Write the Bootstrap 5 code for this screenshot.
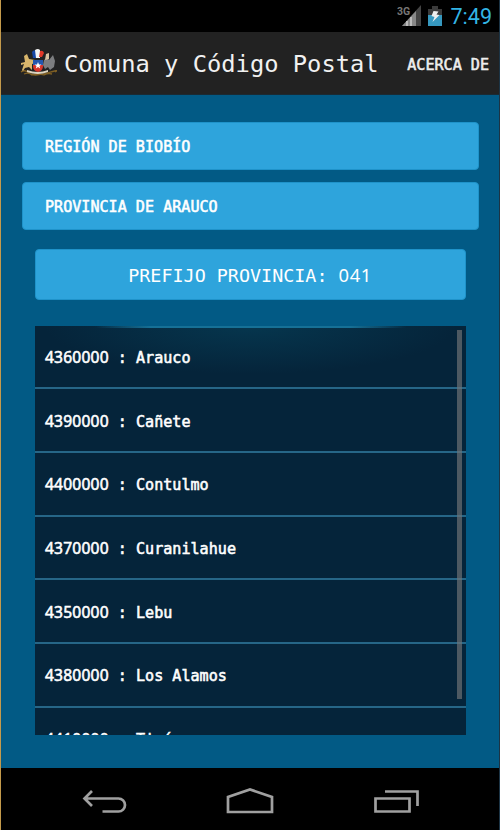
<!DOCTYPE html>
<html lang="es">
<head>
<meta charset="utf-8">
<meta name="viewport" content="width=device-width, initial-scale=1">
<title>Comuna y Código Postal</title>
<link href="https://cdn.jsdelivr.net/npm/bootstrap@5.3.0/dist/css/bootstrap.min.css" rel="stylesheet">
<style>
  body { font-family: "DejaVu Sans Mono", monospace; background: #000; color: #fff; }
  .phone { width: 500px; height: 830px; background: #025a85; border-left: 1px solid #c49a4b; border-right: 1px solid #1c3445; }
  .status { height: 32px; background: #000; padding-right: 7px; }
  .clock { font: 21.5px/32px Roboto, sans-serif; color: #33b5e5; margin-left: 8px; padding-top: 2px; }
  .appbar { height: 63px; background: #222; border-bottom: 1px solid #1a2a33; padding: 0 10px 0 18px; }
  .title { font-size: 23.75px; line-height: 30px; color: #f1f1f1; margin-left: 7px; padding-top: 2px; }
  .strong-text { font-size: 15.1px; line-height: 20px; -webkit-text-stroke: .55px currentColor; white-space: pre; }
  .about { color: #eee; padding-top: 3px; }
  .digits { font-family: "Noto Sans", sans-serif; letter-spacing: .03em; line-height: 1; }
  .screen { height: 673px; padding: 27px 20.5px 0; }
  .picker, .prefix { background: #2ea4dc; border: 1px solid #1f93ca; border-radius: 4px; color: #fff; }
  .picker { height: 48px; margin-bottom: 12px; padding: 1px 22.5px 0; }
  .prefix { height: 51px; margin: 19px 13px 0; font-size: 18.4px; line-height: 24px; padding-top: 2px; }
  .places { height: 409.5px; margin: 25.500px 13px 0; background: #05243a; }
  .place { flex: 0 0 63.7px; padding: 3px 10.5px 0; border-bottom: 2px solid #266687; }
  .place .digits { font-size: 15.6px; letter-spacing: .012em; }
  .glow { inset: 0 0 auto; height: 50px; background: radial-gradient(ellipse 205px 48px at 50% 0, #06364e, transparent); }
  .glow-line { top: 0; left: 60px; right: 60px; height: 2px; background: linear-gradient(90deg, transparent, #167096 18%, #167096 82%, transparent); }
  .thumb { top: 4px; right: 4px; width: 5px; height: 369px; background: rgba(112, 115, 118, .68); }
  .softkeys { height: 62px; background: #000; }
</style>
<script src="https://cdn.jsdelivr.net/npm/bootstrap@5.3.0/dist/js/bootstrap.bundle.min.js"></script>
</head>
<body class="overflow-hidden">
<div class="phone d-flex flex-column overflow-hidden">
  <div class="status d-flex justify-content-end align-items-center">
    <svg width="46" height="32" viewBox="0 0 46 32">
      <text x="0" y="15" font-family="Roboto, sans-serif" font-size="10.5" font-weight="700" fill="#777">3G</text>
      <path d="M24 5v21H5z" fill="#444"/>
      <path d="M19 11v15H5z" fill="#888"/>
      <path d="M10 21v5M14 17v9" stroke="#bbb" stroke-width="2"/>
      <path d="M35 6h6v3h4v7H31V9h4z" fill="#3b3b3b"/>
      <path d="M31 15h14v11H31z" fill="#3698bf"/>
      <path d="M36.500 11l5 .5-2 3 3 .5-7 7 2-5-3-1z" fill="#eee"/>
    </svg>
    <div class="clock">7:49</div>
  </div>

  <nav class="appbar d-flex align-items-center">
    <svg width="38" height="28" viewBox="0 0 38 28">
      <path d="M2 23q4-3 8 1t18 0 8-1M5 25q5-2 8 1 6-2 12 0 4-2 8-1" fill="none" stroke="#806024" stroke-width="1.300"/>
      <path d="M5 7l3-2 2 5 6 1v3l-3 1v6l-3-3-4 1-2 3-1-1 2-6-3 1v-2l4-1z" fill="#d9b66c"/>
      <path d="M25 11l3-2 2 2 4-5 2 6-1 6-4 3-2-3-3 2-2-4z" fill="#7d7e80"/>
      <path d="M27 5l3-1v6l-4 1z" fill="#d6c3a1"/>
      <path d="M14 11h10v6q0 5-5 6-5-1-5-6z" fill="#d8362b"/>
      <path d="M14 11h10v5H14z" fill="#2456ad"/>
      <path d="M19 13l1 2.500h2.500l-2 1.500.7 2.500-2.200-1.500-2.200 1.500.7-2.500-2-1.500H18z" fill="#fff"/>
      <path d="M13 3q2-3 4-1v7h-3z" fill="#1646a6"/>
      <path d="M16 1q3-2 5 0v8h-4z" fill="#f4f4f4"/>
      <path d="M21 2q3-1 4 2l-2 4h-3z" fill="#e13828"/>
      <path d="M8 21q11 4 21 0v2q-10 4-21 0z" fill="#ded5c0"/>
    </svg>
    <div class="title text-nowrap">Comuna y Código Postal</div>
    <div class="about strong-text ms-auto">ACERCA DE</div>
  </nav>

  <main class="screen">
    <div class="picker d-flex align-items-center strong-text">REGIÓN DE BIOBÍO</div>
    <div class="picker d-flex align-items-center strong-text">PROVINCIA DE ARAUCO</div>
    <div class="prefix d-flex justify-content-center align-items-center"><div>PREFIJO PROVINCIA: <span class="digits">041</span></div></div>
    <div class="places position-relative d-flex flex-column overflow-hidden">
      <div class="glow position-absolute"></div>
      <div class="glow-line position-absolute"></div>
      <div class="place position-relative d-flex align-items-center strong-text"><div><span class="digits">4360000</span> : Arauco</div></div>
      <div class="place d-flex align-items-center strong-text"><div><span class="digits">4390000</span> : Cañete</div></div>
      <div class="place d-flex align-items-center strong-text"><div><span class="digits">4400000</span> : Contulmo</div></div>
      <div class="place d-flex align-items-center strong-text"><div><span class="digits">4370000</span> : Curanilahue</div></div>
      <div class="place d-flex align-items-center strong-text"><div><span class="digits">4350000</span> : Lebu</div></div>
      <div class="place d-flex align-items-center strong-text"><div><span class="digits">4380000</span> : Los Alamos</div></div>
      <div class="place d-flex align-items-center strong-text"><div><span class="digits">4410000</span> : Tirúa</div></div>
      <div class="thumb position-absolute"></div>
    </div>
  </main>

  <footer class="softkeys">
    <svg width="498" height="62" viewBox="1 768 498 62" fill="none" stroke="#a0a0a0" stroke-width="2.700">
      <path d="M92 791l-7.500 7.500L92 806M84.500 798.500H118.500a6.500 6.500 0 0 1 0 13H102.500"/>
      <path d="M228 812V797l22-7.500 22 7.500v15z"/>
      <path d="M375.500 798.500h34v13h-34zM385 791.500h32.500V806"/>
    </svg>
  </footer>
</div>
</body>
</html>
